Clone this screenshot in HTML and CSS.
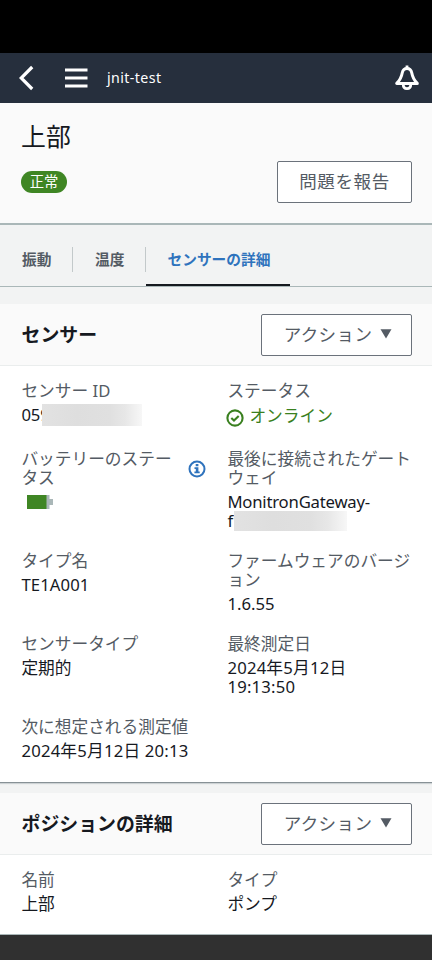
FILE: index.html
```html
<!DOCTYPE html>
<html lang="ja">
<head>
<meta charset="utf-8">
<meta name="viewport" content="width=device-width">
<title>jnit-test</title>
<link rel="stylesheet" href="styles.css">
</head>
<body>
<div class="statusbar"></div>
<header class="topbar">
  <svg class="back" width="16" height="26" viewBox="0 0 16 26"><path d="M13.200 2 2.200 13l11 11" fill="none" stroke="#fff" stroke-width="3.200"/></svg>
  <svg class="menu" width="23" height="20" viewBox="0 0 23 20"><path d="M0 2h22.500M0 10h22.500M0 18h22.500" fill="none" stroke="#fff" stroke-width="3"/></svg>
  <span class="project">jnit-test</span>
  <svg class="bell" width="26" height="26" viewBox="0 0 26 26" fill="none" stroke="#fff" stroke-width="3" stroke-linejoin="round"><path d="M13 3.500c-3 0-4.300 1.900-4.800 4.500-.8 4.500-2 7-5.500 10.400h20.600c-3.500-3.400-4.700-5.900-5.500-10.400-.5-2.600-1.800-4.500-4.800-4.500z"/><path d="M13 .5v3M9.200 19c0 3 1.500 4.700 3.800 4.700s3.800-1.700 3.800-4.700" stroke-width="2.800"/></svg>
</header>
<section class="summary">
  <h1>上部</h1>
  <div class="summary-row">
    <span class="badge">正常</span>
    <button class="btn report">問題を報告</button>
  </div>
</section>
<nav class="tabs">
  <a class="tab first">振動</a>
  <a class="tab second">温度</a>
  <a class="tab active">センサーの詳細</a>
</nav>
<section class="card">
  <div class="card-head">
    <h2>センサー</h2>
    <button class="btn action">アクション<svg width="12" height="10" viewBox="0 0 12 10"><path d="M.5.3h11L6 9.500z" fill="#545b64"/></svg></button>
  </div>
  <dl class="fields">
    <div class="field tall"><dt>センサー ID</dt><dd class="hidden-row"><span class="lat">059</span><i class="redacted id-mask"></i></dd></div>
    <div class="field"><dt>ステータス</dt><dd class="online"><svg width="18" height="18" viewBox="0 0 18 18" fill="none" stroke="#3a8020" stroke-width="2.1"><circle cx="9" cy="9" r="7.600"/><path d="m5.300 8.900 2.700 2.600 4.700-4.600"/></svg>オンライン</dd></div>
    <div class="field"><dt class="with-info"><span>バッテリーのステー<br>タス</span><svg width="18" height="18" viewBox="0 0 18 18"><circle cx="9" cy="9" r="7.500" fill="none" stroke="#2f73bd" stroke-width="2"/><path d="M7.700 4h2.700v2.200H7.700zM6.500 7.300h3.900v4.300h1.300v1.700H6.400v-1.700h1.400V9H6.500z" fill="#2f73bd"/></svg></dt><dd class="battery"><svg width="27" height="14" viewBox="0 0 27 14"><path d="M19 0h3.500v4H26v6h-3.500v4H19z" fill="#aab7b8"/><path d="M0 0h19.500v14H0z" fill="#3f8624"/></svg></dd></div>
    <div class="field"><dt>最後に接続されたゲートウェイ</dt><dd><span class="gateway">MonitronGateway-</span><br><span class="hidden-row"><span>f</span><i class="redacted gateway-mask"></i></span></dd></div>
    <div class="field"><dt>タイプ名</dt><dd class="type-name">TE1A001</dd></div>
    <div class="field"><dt>ファームウェアのバージ<br>ョン</dt><dd>1.6.55</dd></div>
    <div class="field"><dt>センサータイプ</dt><dd>定期的</dd></div>
    <div class="field"><dt>最終測定日</dt><dd class="date">2024年5月12日<br>19:13:50</dd></div>
    <div class="field"><dt>次に想定される測定値</dt><dd class="date">2024年5月12日 20:13</dd></div>
  </dl>
</section>
<section class="card position">
  <div class="card-head">
    <h2>ポジションの詳細</h2>
    <button class="btn action">アクション<svg width="12" height="10" viewBox="0 0 12 10"><path d="M.5.3h11L6 9.500z" fill="#545b64"/></svg></button>
  </div>
  <dl class="fields">
    <div class="field"><dt>名前</dt><dd>上部</dd></div>
    <div class="field"><dt>タイプ</dt><dd>ポンプ</dd></div>
  </dl>
</section>
<div class="navbar"></div>
</body>
</html>
```
FILE: styles.css
```css
* { box-sizing: border-box; }
body {
  margin: 0;
  width: 432px;
  height: 960px;
  overflow: hidden;
  display: flex;
  flex-direction: column;
  background: #f2f3f3;
  color: #16191f;
  font: 16.7px/19px "Noto Sans", "Noto Sans CJK JP", sans-serif;
}
h1, h2, dl, dd { margin: 0; font-weight: 400; }
svg { flex: none; display: block; }
.statusbar { height: 53px; background: #000; flex: none; }
.topbar {
  height: 50px;
  flex: none;
  display: flex;
  align-items: center;
  padding: 0 12px 0 19px;
  background: #262f3d;
  color: #fff;
}
.menu { margin-left: 30px; }
.project { margin: -2px 0 0 19px; font-size: 14.2px; letter-spacing: .4px; }
.bell { margin-left: auto; }
.summary {
  height: 122px;
  flex: none;
  padding: 15px 20px 0 21px;
  background: #fafafa;
  border-bottom: 2px solid #aab7b8;
}
h1 { font-size: 24.9px; line-height: 34px; font-family: "Noto Sans CJK JP", sans-serif; }
.summary-row { display: flex; justify-content: space-between; margin-top: 9px; }
.badge {
  width: 46px;
  height: 22px;
  margin-top: 10px;
  border-radius: 11px;
  background: #3f8624;
  color: #fff;
  font-size: 14.300px;
  line-height: 21px;
  text-align: center;
}
.btn {
  height: 42px;
  padding: 0;
  border: 1px solid #6b727b;
  border-radius: 2px;
  background: #fff;
  color: #545b64;
  font: 17.500px/38px "Noto Sans CJK JP", sans-serif;
  letter-spacing: .4px;
}
.report { width: 135px; padding-bottom: 2px; letter-spacing: .6px; }
.action { width: 151px; display: flex; align-items: center; justify-content: center; gap: 8px; padding: 0 0 1px 3px; }
.tabs {
  height: 62px;
  flex: none;
  display: flex;
  padding-top: 22px;
  border-bottom: 1px solid #aab7b8;
  font-size: 14.700px;
  line-height: 25px;
  font-weight: 700;
  color: #545b64;
}
.tab { height: 25px; }
.first { width: 73px; padding-left: 22px; border-right: 1px solid #c3c9ca; }
.second { width: 73px; padding-left: 22px; border-right: 1px solid #c3c9ca; }
.active { width: 144px; height: 39px; padding-left: 21.500px; color: #2f73bd; border-bottom: 2px solid #16191f; }
.card { height: 479px; flex: none; margin-top: 17px; background: #fff; border-bottom: 1px solid #879196; box-shadow: 0 1px 1px #cdd2d4; }
.card-head {
  height: 62px;
  display: flex;
  align-items: center;
  justify-content: space-between;
  padding: 0 20px 0 21.500px;
  background: #fafafa;
  border-bottom: 1px solid #eaeded;
}
h2 { padding-bottom: 2px; font-size: 18.900px; line-height: 24px; font-weight: 700; font-family: "Noto Sans CJK JP", sans-serif; }
.fields {
  display: grid;
  grid-template-columns: 184px 184px;
  column-gap: 22px;
  row-gap: 21px;
  padding: 15px 0 0 21.400px;
}
.tall { min-height: 47px; }
dt { color: #545b64; }
dd { margin-top: 5px; }
.online { display: flex; align-items: center; gap: 5px; color: #3a8020; height: 21px; }
.online svg { margin: 5px 0 0 -1px; }
.with-info { display: flex; justify-content: space-between; align-items: center; }
.with-info svg { margin: 1px -1px 0 0; }
.battery { padding: 3px 0 0 5.600px; }
.hidden-row { display: flex; align-items: flex-start; height: 19px; }
.lat { letter-spacing: -.1px; }
.gateway { letter-spacing: -.2px; }
.date { letter-spacing: .2px; }
.type-name { letter-spacing: .1px; }
.redacted { height: 22px; background: linear-gradient(90deg, #e2e2e2, #dedede 35%, #e0e0e0 68%, #e7e7e7 83%, #f7f7f7); }
.id-mask { width: 100px; margin: -1px 0 0 -7.400px; }
.gateway-mask { width: 113px; height: 20px; margin: 0 0 0 .6px; }
.position { height: 142px; margin-top: 10px; box-shadow: none; border-bottom-color: #aab7b8; }
.navbar { flex: 1; background: #303030; }
```
